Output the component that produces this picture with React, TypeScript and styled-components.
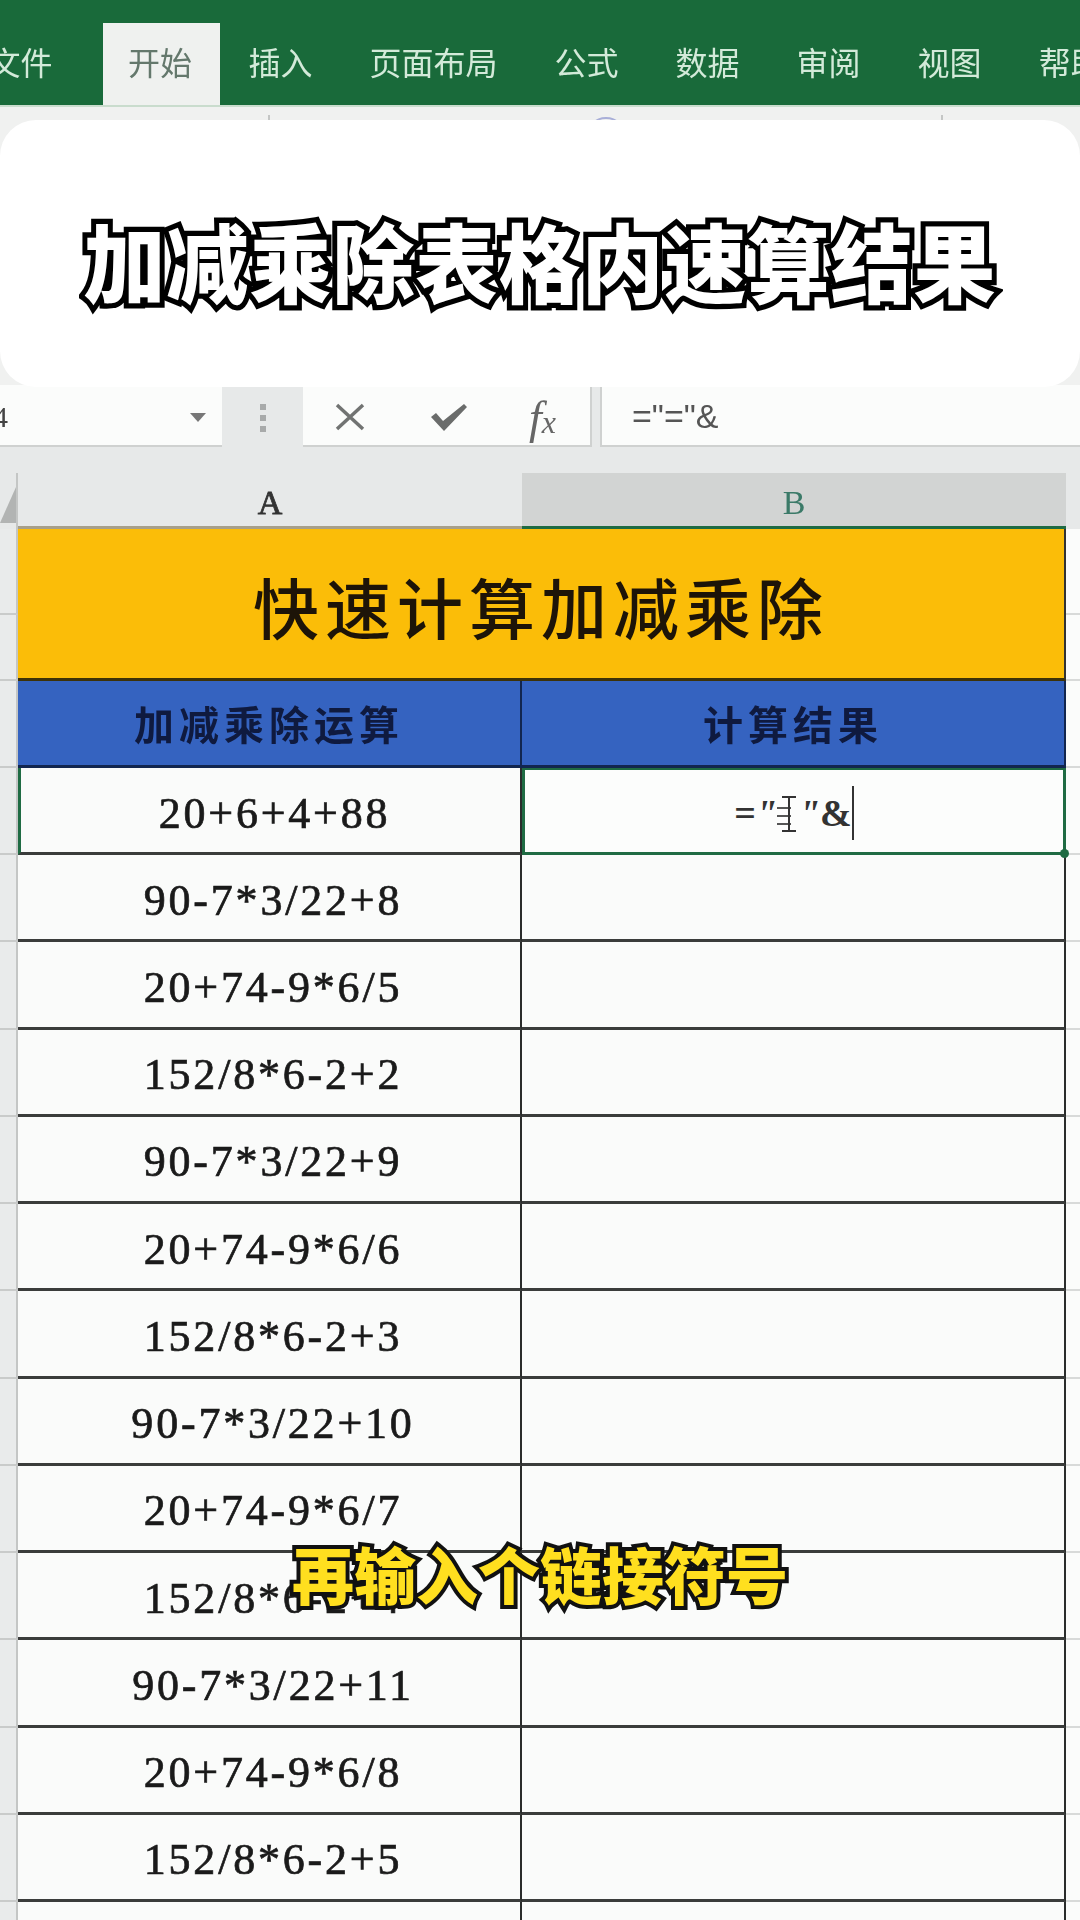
import React from 'react'
import styled, { createGlobalStyle } from 'styled-components'

const SANS = '"Noto Sans CJK SC", "Noto Sans", sans-serif'
const SERIF = '"Liberation Serif", "Noto Sans CJK SC", serif'

const TABS = ['文件', '开始', '插入', '页面布局', '公式', '数据', '审阅', '视图', '帮助']

const ROWS = [
  '90-7*3/22+8',
  '20+74-9*6/5',
  '152/8*6-2+2',
  '90-7*3/22+9',
  '20+74-9*6/6',
  '152/8*6-2+3',
  '90-7*3/22+10',
  '20+74-9*6/7',
  '152/8*6-2+4',
  '90-7*3/22+11',
  '20+74-9*6/8',
  '152/8*6-2+5',
  '90-7*3/22+12',
]

export default function App() {
  return (
    <Page>
      <GlobalStyle />
      <Screen>
        <TabBar>
          {TABS.map((t) => (
            <Tab key={t} $active={t === '开始'}>
              {t}
            </Tab>
          ))}
        </TabBar>

        <Ribbon>
          <RibbonMark />
          <RibbonArc />
          <RibbonMark />
        </Ribbon>

        <FormulaBar>
          <NameBox>
            <NameValue>4</NameValue>
            <Caret />
          </NameBox>
          <Grip>
            <i />
            <i />
            <i />
          </Grip>
          <ActionBox>
            <svg width="36" height="32" viewBox="0 0 36 32">
              <path d="M5 4 L31 28 M31 4 L5 28" stroke="#717372" strokeWidth="3.5" fill="none" />
            </svg>
            <svg width="40" height="32" viewBox="0 0 40 32">
              <path d="M2 16 L7 12 L14 20 L35 3 L38 6 L15 30 Z" fill="#6a6c6b" />
            </svg>
            <FxLabel>
              f<small>x</small>
            </FxLabel>
          </ActionBox>
          <FormulaInput>="="&amp;</FormulaInput>
        </FormulaBar>

        <ColumnHeaders>
          <Corner />
          <ColumnLabel>A</ColumnLabel>
          <ColumnLabel $active>B</ColumnLabel>
        </ColumnHeaders>

        <Sheet>
          <Gutter />
          <TitleCell>快速计算加减乘除</TitleCell>
          <Margin />
          <Gutter />
          <Margin />

          <Gutter />
          <HeadCell>加减乘除运算</HeadCell>
          <HeadCell>计算结果</HeadCell>
          <Margin />

          <Gutter />
          <ValueCell $first>20+6+4+88</ValueCell>
          <SelectedCell>
            <Typing>
              =<Quote>"</Quote>
              <svg width="22" height="44" viewBox="0 0 22 44">
                <path d="M0 17 H14 M0 25 H14 M0 33 H14" stroke="#555" strokeWidth="2" />
                <path d="M5 6 H19 M5 40 H19 M12 6 V40" stroke="#333" strokeWidth="2" fill="none" />
              </svg>
              <Quote>"</Quote>&amp;
            </Typing>
            <TextCaret />
            <FillHandle />
          </SelectedCell>
          <Margin />

          {ROWS.map((r) => (
            <React.Fragment key={r}>
              <Gutter />
              <ValueCell>{r}</ValueCell>
              <EmptyCell />
              <Margin />
            </React.Fragment>
          ))}
        </Sheet>
      </Screen>

      <TitleCard>
        <BigTitle>加减乘除表格内速算结果</BigTitle>
      </TitleCard>
      <Subtitle>再输入个链接符号</Subtitle>
    </Page>
  )
}

const GlobalStyle = createGlobalStyle`
  html, body {
    margin: 0;
    padding: 0;
    background: #fafbfa;
  }
`

const Page = styled.div`
  position: relative;
  width: 1080px;
  height: 1920px;
  overflow: hidden;
  font-family: ${SANS};
`

const Screen = styled.div`
  height: 100%;
  filter: blur(0.7px);
`

const TabBar = styled.div`
  height: 105px;
  box-sizing: border-box;
  margin-left: -40px;
  display: flex;
  align-items: flex-end;
  background: #196a3a;
  white-space: nowrap;
`

const Tab = styled.div<{ $active?: boolean }>`
  height: 82px;
  box-sizing: border-box;
  padding: 0 28.5px 7px;
  flex: none;
  display: flex;
  align-items: center;
  font-size: 32px;
  line-height: 1;
  color: ${(p) => (p.$active ? '#64786c' : '#d3ead9')};
  background: ${(p) => (p.$active ? '#eff1ef' : 'transparent')};
  ${(p) => p.$active && 'margin-left: 22px; padding: 0 28px 7px 25px;'}
`

const Ribbon = styled.div`
  height: 280px;
  box-sizing: border-box;
  padding: 8px 137px 0 268px;
  display: flex;
  justify-content: space-between;
  background: #f0f1f0;
  border-top: 2px solid #c9dccd;
`

const RibbonMark = styled.div`
  width: 2px;
  height: 12px;
  background: #c4c6c5;
`

const RibbonArc = styled.div`
  width: 36px;
  height: 36px;
  margin-top: 2px;
  border: 2px solid #a9afd8;
  border-radius: 50%;
`

const FormulaBar = styled.div`
  height: 88px;
  box-sizing: border-box;
  padding-bottom: 26px;
  display: flex;
  background: #e7e9e9;
`

const NameBox = styled.div`
  width: 222px;
  flex: none;
  display: flex;
  align-items: center;
  justify-content: space-between;
  box-sizing: border-box;
  padding: 4px 16px 0 0;
  background: #fbfcfb;
  border-bottom: 2px solid #cfd1d0;
`

const NameValue = styled.span`
  margin-left: -7px;
  font: 30px ${SERIF};
  color: #444;
`

const Caret = styled.span`
  width: 0;
  height: 0;
  border-left: 8px solid transparent;
  border-right: 8px solid transparent;
  border-top: 9px solid #777;
`

const Grip = styled.div`
  width: 81px;
  flex: none;
  display: flex;
  flex-direction: column;
  align-items: center;
  justify-content: center;
  gap: 5px;
  padding-top: 4px;

  i {
    width: 6px;
    height: 6px;
    background: #a8aaaa;
  }
`

const ActionBox = styled.div`
  width: 289px;
  flex: none;
  box-sizing: border-box;
  padding: 4px 34px 0 29px;
  display: flex;
  align-items: center;
  justify-content: space-between;
  background: #fbfcfb;
  border-bottom: 2px solid #cfd1d0;
  border-right: 2px solid #cfd1d0;
`

const FxLabel = styled.span`
  font: italic 46px ${SERIF};
  color: #666;

  small {
    font-size: 32px;
  }
`

const FormulaInput = styled.div`
  flex: 1;
  margin-left: 8px;
  box-sizing: border-box;
  padding: 2px 0 0 30px;
  display: flex;
  align-items: center;
  font-family: "Liberation Sans", sans-serif;
  font-size: 34px;
  color: #555;
  background: #fbfcfb;
  border-left: 2px solid #cfd1d0;
  border-bottom: 2px solid #cfd1d0;
`

const ColumnHeaders = styled.div`
  height: 56px;
  display: grid;
  grid-template-columns: 18px 504px 544px;
  background: #e7e9e9;
`

const Corner = styled.div`
  position: relative;
  border-right: 2px solid #c4c6c5;
  box-sizing: border-box;

  &::after {
    content: '';
    position: absolute;
    left: 0;
    bottom: 6px;
    border-bottom: 36px solid #b2b4b3;
    border-left: 16px solid transparent;
  }
`

const ColumnLabel = styled.div<{ $active?: boolean }>`
  display: flex;
  align-items: center;
  justify-content: center;
  box-sizing: border-box;
  padding-top: 6px;
  font: normal 34px ${SERIF};
  color: ${(p) => (p.$active ? '#3b7a68' : '#333')};
  background: ${(p) => (p.$active ? '#d2d4d3' : 'transparent')};
  border-bottom: 3px solid ${(p) => (p.$active ? '#1f6b43' : '#a8a08a')};
  -webkit-text-stroke: ${(p) => (p.$active ? '0' : '0.8px #333')};
`

const Sheet = styled.div`
  display: grid;
  grid-template-columns: 18px 504px 544px 14px;
  grid-template-rows: 86px 66px 87px 87px repeat(13, 87.25px);
  background: #fafbfa;
`

const Gutter = styled.div`
  background: #e9ebeb;
  border-right: 2px solid #c4c6c5;
  border-bottom: 2px solid #c9cbca;
  box-sizing: border-box;
`

const Margin = styled.div`
  background: #fbfcfb;
  border-bottom: 2px solid #d8dad9;
  box-sizing: border-box;
`

const TitleCell = styled.div`
  grid-column: 2 / 4;
  grid-row: span 2;
  display: flex;
  align-items: center;
  justify-content: center;
  box-sizing: border-box;
  padding-top: 2px;
  font-size: 66px;
  letter-spacing: 6px;
  font-weight: 500;
  color: #1d1408;
  background: #fbbd08;
  border-bottom: 3px solid #3d3208;
  border-right: 2px solid #333;
`

const HeadCell = styled.div`
  display: flex;
  align-items: center;
  justify-content: center;
  box-sizing: border-box;
  font-size: 40px;
  letter-spacing: 5px;
  font-weight: 700;
  color: #0f1a3f;
  background: #3563c0;
  border-bottom: 3px solid #12264f;
  border-right: 2px solid #12264f;
`

const ValueCell = styled.div<{ $first?: boolean }>`
  display: flex;
  align-items: center;
  justify-content: center;
  box-sizing: border-box;
  padding: 6px 0 0 8px;
  font-family: ${SERIF};
  font-size: 44px;
  letter-spacing: 2.8px;
  color: #1a1a1a;
  -webkit-text-stroke: 0.7px #1a1a1a;
  white-space: nowrap;
  border-bottom: 3px solid #3a3c3b;
  border-right: 2px solid #2a2c2b;
  ${(p) => p.$first && 'border-left: 3px solid #1f6b43;'}
`

const EmptyCell = styled.div`
  box-sizing: border-box;
  border-bottom: 3px solid #3a3c3b;
  border-right: 2px solid #2a2c2b;
`

const SelectedCell = styled.div`
  position: relative;
  display: flex;
  align-items: center;
  justify-content: center;
  box-sizing: border-box;
  padding: 4px 0 0 0;
  background: #fcfdfc;
  border: 3px solid #1f6b43;
  border-top-width: 2px;
`

const Typing = styled.span`
  display: flex;
  align-items: center;
  font-family: ${SERIF};
  font-weight: 700;
  font-size: 38px;
  color: #333;
  white-space: pre;
`

const Quote = styled.span`
  font-style: italic;
`

const TextCaret = styled.span`
  width: 2px;
  height: 54px;
  background: #333;
`

const FillHandle = styled.span`
  position: absolute;
  right: -6px;
  bottom: -6px;
  width: 9px;
  height: 9px;
  border-radius: 50%;
  background: #1f6b43;
`

const TitleCard = styled.div`
  position: absolute;
  left: 0;
  right: 0;
  top: 120px;
  height: 267px;
  display: flex;
  align-items: center;
  justify-content: center;
  background: #fff;
  border-radius: 36px;
`

const BigTitle = styled.div`
  margin-top: 12px;
  font-size: 82px;
  font-weight: 900;
  letter-spacing: 1px;
  line-height: 1;
  color: #fff;
  white-space: nowrap;
  transform: scaleY(1.06);
  -webkit-text-stroke: 10px #000;
  paint-order: stroke fill;
  text-shadow: 2px 2px 0 #000;
`

const Subtitle = styled.div`
  position: absolute;
  left: 290px;
  top: 1540px;
  width: 500px;
  height: 65px;
  display: flex;
  align-items: center;
  justify-content: center;
  font-size: 62px;
  font-weight: 900;
  line-height: 1;
  color: #ffdf1f;
  white-space: nowrap;
  -webkit-text-stroke: 8px #111;
  paint-order: stroke fill;
`
